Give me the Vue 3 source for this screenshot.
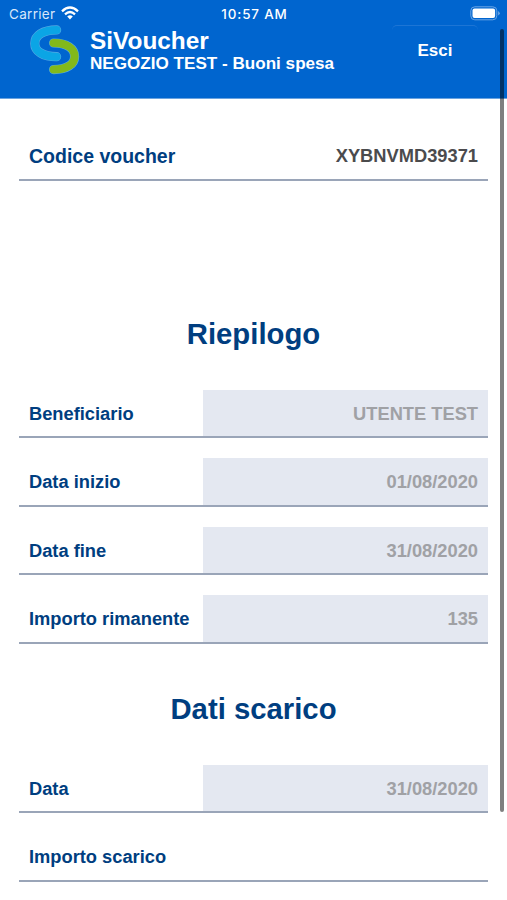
<script setup>
const summary = [
  { label: 'Beneficiario', value: 'UTENTE TEST' },
  { label: 'Data inizio', value: '01/08/2020' },
  { label: 'Data fine', value: '31/08/2020' },
  { label: 'Importo rimanente', value: '135' },
]
</script>

<template>
  <div class="screen">
    <header>
      <div class="status">
        <span class="carrier">Carrier</span>
        <svg class="wifi" width="18" height="14" viewBox="0 0 18 14" fill="none" stroke="#fff" stroke-width="2.3">
          <path d="M1 5.3Q9-2.2 17 5.3M4 8.3Q9 3.8 14 8.3" />
          <path d="M6.2 10.5Q9 8.2 11.8 10.5L9 13.4Z" fill="#fff" stroke="none" />
        </svg>
        <span class="clock">10:57 AM</span>
        <svg class="battery" width="31" height="15" viewBox="0 0 31 15">
          <rect x=".8" y=".8" width="26" height="13" rx="4" fill="none" stroke="#6ba5e5" />
          <rect x="2.5" y="2.5" width="22.6" height="9.6" rx="2" fill="#fff" />
          <path d="M28.2 5Q31.2 7.3 28.2 9.6Z" fill="#78ace6" />
        </svg>
      </div>
      <div class="brand">
        <svg class="logo" width="52" height="52" viewBox="0 0 52 52" fill="none" stroke-linecap="round">
          <g stroke="#55a9e3" stroke-width="9.2">
            <path d="M27.6 4.9C14 4.9 5.8 10.5 5.8 18.4C5.8 26.3 14 31.7 27.6 31.7" />
            <path d="M24.6 18C38 18 45.6 23.5 45.6 31.4C45.6 39.3 38 44.6 24.6 44.6" />
          </g>
          <g stroke-width="8">
            <path stroke="#0ba5e5" d="M27.6 4.9C14 4.9 5.8 10.5 5.8 18.4C5.8 26.3 14 31.7 27.6 31.7" />
            <path stroke="#82b91b" d="M24.6 18C38 18 45.6 23.5 45.6 31.4C45.6 39.3 38 44.6 24.6 44.6" />
          </g>
        </svg>
        <div class="titles">
          <div class="name">SiVoucher</div>
          <div class="shop">NEGOZIO TEST - Buoni spesa</div>
        </div>
        <button class="exit">Esci</button>
      </div>
    </header>
    <main>
      <div class="row code">
        <label>Codice voucher</label>
        <div class="value">XYBNVMD39371</div>
      </div>
      <h2 class="recap">Riepilogo</h2>
      <div class="group">
        <div v-for="r in summary" :key="r.label" class="row">
          <label>{{ r.label }}</label>
          <div class="value filled">{{ r.value }}</div>
        </div>
      </div>
      <h2 class="unload">Dati scarico</h2>
      <div class="group">
        <div class="row">
          <label>Data</label>
          <div class="value filled">31/08/2020</div>
        </div>
        <div class="row">
          <label>Importo scarico</label>
          <div class="value"></div>
        </div>
      </div>
    </main>
    <div class="scrollbar"></div>
  </div>
</template>

<style>
body { margin: 0; background: #fff; }
</style>

<style scoped>
.screen { position: relative; width: 507px; height: 900px; overflow: hidden; background: #fff; font-family: "Liberation Sans", Arial, sans-serif; }
header { height: 99px; background: #0065cf; border-bottom: 1px solid #6ba3df; box-sizing: border-box; color: #fff; }
.status { height: 25px; display: grid; grid-template-columns: 52px 18px 1fr 31px; padding: 0 5px 0 9px; box-sizing: border-box; font-family: Inter, sans-serif; }
.carrier { font-size: 13.5px; line-height: 28px; letter-spacing: .3px; color: #d7e7fa; }
.wifi { margin-top: 6px; }
.clock { font-size: 13.4px; font-weight: 500; line-height: 28px; letter-spacing: .85px; text-align: center; margin-left: -45px; margin-right: -4px; }
.battery { margin-top: 6px; margin-left: -1px; }
.brand { display: flex; height: 72px; }
.logo { margin-left: 29px; flex: none; overflow: visible; }
.titles { margin-left: 9px; width: 302px; white-space: nowrap; font-weight: bold; }
.name { font-size: 24.4px; line-height: 28px; margin-top: 2px; }
.shop { font-size: 17.1px; line-height: 20px; margin-top: -1px; }
.exit { width: 86px; height: 50px; padding: 0; border: 0; border-top: 1px solid #1d75d5; border-radius: 5px; background: transparent; color: #fff; font: bold 17px "Liberation Sans", Arial, sans-serif; }
main { padding: 33px 19px 0; }
.row { display: grid; grid-template-columns: 183.5px 1fr; grid-template-rows: 46.5px; height: 48.5px; box-sizing: border-box; border-bottom: 2px solid #9aa5b8; }
.row label { padding-left: 10px; line-height: 47.5px; color: #003e80; font-size: 18.3px; font-weight: bold; white-space: nowrap; }
.value { padding-right: 10px; line-height: 47.5px; text-align: right; font-size: 18.3px; font-weight: bold; color: #4b4b4d; }
.filled { height: 46.5px; background: #e4e8f1; color: #a0a1a5; }
.code label { font-size: 19.5px; line-height: 49px; }
.code .value { line-height: 48px; }
h2 { margin: 0; color: #003e80; font-size: 29.3px; line-height: 36px; text-align: center; }
.recap { padding: 135px 0 38px; }
.unload { padding: 47px 0 38px; }
.group { display: grid; row-gap: 20px; }
.scrollbar { position: absolute; left: 500px; top: 29px; width: 4px; height: 783px; border-radius: 2px; background: rgba(0, 0, 0, .5); }
</style>
